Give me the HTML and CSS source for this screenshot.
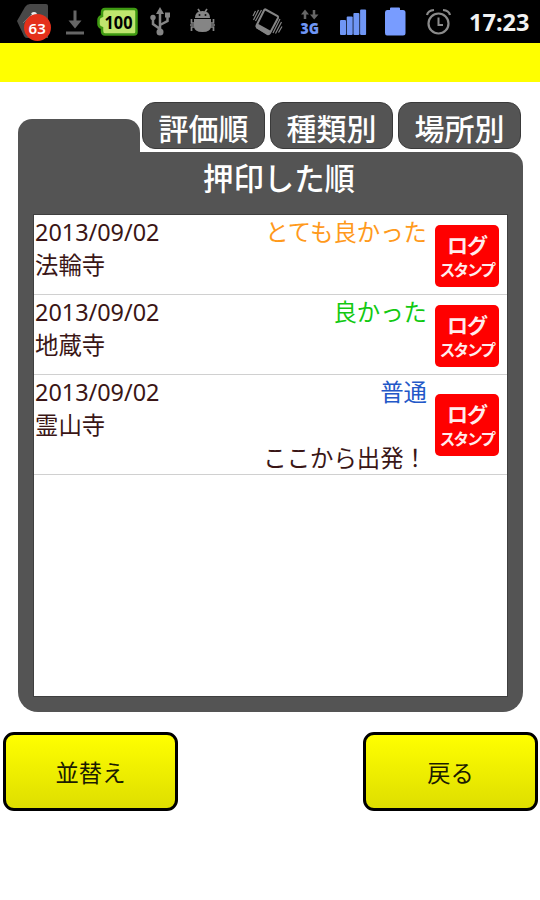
FILE: index.html
```html
<!DOCTYPE html>
<html lang="ja">
<head>
  <meta charset="UTF-8" />
  <meta name="viewport" content="width=device-width, initial-scale=1.0" />
  <title>ログスタンプ</title>
  <link rel="stylesheet" href="styles.css">
</head>
<body>
  <header class="status-bar">
    <svg width="44" height="43" viewBox="12 0 44 43">
      <path d="M17 21 L25 7 Q27 4 30 4 H46 Q48 4 48 6 V38 H27 Q25 38 24 36Z" fill="#484848" />
      <circle cx="34" cy="15" r="3" fill="#eee" />
      <path d="M23 23 L32 14" stroke="#777" stroke-width="1" />
      <circle cx="37.500" cy="27.500" r="13.500" fill="#e4301b" />
      <text x="37.200" y="33.500" class="badge-text">63</text>
    </svg>
    <svg width="36" height="43" viewBox="56 0 36 43">
      <path d="M75 10.500 V23 M66 33 H84" stroke="#666" stroke-width="3" />
      <path d="M68.500 20.500 H81.500 L75 28.500Z" fill="#666" />
    </svg>
    <svg width="52" height="43" viewBox="92 0 52 43">
      <path d="M105 9 H134 Q136.500 9 136.500 11.500 V32 Q136.500 34.500 134 34.500 H105 Q102 34.500 102 31 V28 Q98.500 27 98.500 24 V20 Q98.500 17 102 16 V12.500 Q102 9 105 9Z" fill="#bfe66e" stroke="#3f9a12" stroke-width="2.500" />
      <text x="104.500" y="28.500" class="charge-text" textLength="28" lengthAdjust="spacingAndGlyphs">100</text>
    </svg>
    <svg width="34" height="43" viewBox="144 0 34 43">
      <g fill="none" stroke="#858585" stroke-width="2.500">
        <path d="M160 32 V11 M160 29 L153 24 V18 M160 25 L167.500 21 V16" />
      </g>
      <g fill="#858585">
        <path d="M156 14 L160 7 L164 14Z" />
        <circle cx="160" cy="32" r="3.500" />
        <circle cx="153" cy="17.500" r="2.700" />
        <path d="M165 12.500 H170 V17.500 H165Z" />
      </g>
    </svg>
    <svg width="50" height="43" viewBox="178 0 50 43">
      <path d="M195 18 Q195 11 202.500 11 Q210 11 210 18Z M194 19 H211 V26 Q211 32 202.500 32 Q194 32 194 26Z" fill="#858585" />
      <g fill="none" stroke="#858585" stroke-width="1.700">
        <path d="M198 9 L200 12 M207 9 L205 12" />
        <path d="M195 23 H191.500 V19 M194 25 H190 M195 27 H191.500 V31 M210 23 H213.500 V19 M211 25 H215 M210 27 H213.500 V31" />
      </g>
      <circle cx="199.500" cy="15" r="1" fill="#111" />
      <circle cx="205.500" cy="15" r="1" fill="#111" />
    </svg>
    <svg class="push-right" width="40" height="43" viewBox="248 0 40 43">
      <path d="M265.500 9.500 L277.500 16 Q278.500 17 278 18 L270 33 Q269 34.500 267.500 34 L257 27.500 Q256 26.500 256.500 25.500 L264 10.500 Q264.500 9 265.500 9.500Z" fill="none" stroke="#858585" stroke-width="2" />
      <path d="M257.500 23.500 L271 31 L268 35 L256 28Z" fill="#858585" />
      <path d="M261.500 10 L255.500 21 M258.500 10 L253.500 20 M255.500 11 L253 16 M280 19 L273 33 M281.500 22 L275.500 33.500 M282 26.500 L278.500 32.500" stroke="#858585" stroke-width="1.200" />
    </svg>
    <svg width="42" height="43" viewBox="288 0 42 43">
      <path d="M305 19 V12 M314 10 V17" stroke="#666" stroke-width="2.500" />
      <path d="M301 14.500 L305 9.500 L309 14.500Z M310 14.500 H318.500 L314.200 19.500Z" fill="#666" />
      <text x="300.500" y="34" class="network-text" textLength="18.500" lengthAdjust="spacingAndGlyphs">3G</text>
    </svg>
    <svg width="44" height="43" viewBox="330 0 44 43">
      <g fill="#6f96f5">
        <rect x="340" y="20" width="6" height="15" rx="1" />
        <rect x="346.700" y="16.500" width="6" height="18.500" rx="1" />
        <rect x="353.400" y="13" width="6" height="22" rx="1" />
        <rect x="360.100" y="9.500" width="6" height="25.500" rx="1" />
      </g>
    </svg>
    <svg width="42" height="43" viewBox="374 0 42 43">
      <path d="M387 10 H390 V8.500 Q390 7.500 391 7.500 H399 Q400 7.500 400 8.500 V10 H403 Q405.500 10 405.500 12.500 V33 Q405.500 35.500 403 35.500 H387 Q385 35.500 385 33 V12.500 Q385 10 387 10Z" fill="#789cff" />
    </svg>
    <svg width="44" height="43" viewBox="416 0 44 43">
      <g fill="none" stroke="#8b8b8b">
        <circle cx="438.500" cy="23.500" r="10" stroke-width="2.200" />
        <path d="M438.500 17.500 V25 H443" stroke-width="2" />
        <path d="M427 15 Q428 10.500 434 10 M450 15 Q449 10.500 443 10" stroke-width="2.200" />
      </g>
    </svg>
    <span class="clock">17:23</span>
  </header>
  <div class="title-bar"></div>

  <main class="folder">
    <nav class="tabs">
      <div class="tab active"></div>
      <div class="tab">評価順</div>
      <div class="tab">種類別</div>
      <div class="tab">場所別</div>
    </nav>
    <section class="panel">
      <h1 class="panel-title">押印した順</h1>
      <div class="list">
        <div class="row">
          <div class="info">
            <div class="line"><span>2013/09/02</span><span class="great">とても良かった</span></div>
            <div>法輪寺</div>
          </div>
          <div class="stamp"><span class="stamp-top">ログ</span><span class="stamp-bottom">スタンプ</span></div>
        </div>
        <div class="row">
          <div class="info">
            <div class="line"><span>2013/09/02</span><span class="good">良かった</span></div>
            <div>地蔵寺</div>
          </div>
          <div class="stamp"><span class="stamp-top">ログ</span><span class="stamp-bottom">スタンプ</span></div>
        </div>
        <div class="row tall">
          <div class="info">
            <div class="line"><span>2013/09/02</span><span class="normal">普通</span></div>
            <div>霊山寺</div>
            <div class="comment">ここから出発！</div>
          </div>
          <div class="stamp"><span class="stamp-top">ログ</span><span class="stamp-bottom">スタンプ</span></div>
        </div>
      </div>
    </section>
  </main>

  <footer class="buttons">
    <button class="btn">並替え</button>
    <button class="btn">戻る</button>
  </footer>
</body>
</html>
```
FILE: styles.css
```css
* {
  box-sizing: border-box;
}
body {
  margin: 0;
  height: 900px;
  overflow: hidden;
  background: #fff;
  color: #3a1616;
  font-family: 'Noto Sans', 'Noto Sans CJK JP', sans-serif;
}
.status-bar {
  display: flex;
  align-items: center;
  height: 43px;
  padding-left: 12px;
  background: #000;
}
.status-bar svg {
  flex: none;
}
.push-right {
  margin-left: 20px;
}
.clock {
  padding-left: 9px;
  color: #f2f2f2;
  font-size: 23.500px;
  font-weight: bold;
  line-height: 44px;
}
.badge-text {
  fill: #fff;
  font-size: 15px;
  font-weight: 600;
  text-anchor: middle;
}
.charge-text {
  fill: #000;
  font-size: 18.500px;
  font-weight: bold;
}
.network-text {
  fill: #6f96f5;
  font-size: 16px;
  font-weight: 900;
}
.title-bar {
  height: 39px;
  background: #ff0;
}
.folder {
  width: 505px;
  margin: 20px 0 0 18px;
}
.tabs {
  display: flex;
  align-items: flex-start;
  gap: 5px;
  height: 50px;
}
.tab {
  width: 123px;
  height: 47px;
  border: 1px solid #3a3a3a;
  border-radius: 13px;
  background: #545454;
  color: #fff;
  font-size: 30px;
  font-weight: 500;
  line-height: 51px;
  text-align: center;
}
.tab.active {
  align-self: flex-end;
  width: 122px;
  height: 33px;
  margin-right: -3px;
  border: none;
  border-radius: 14px 14px 0 0;
}
.panel {
  height: 560px;
  padding: 0 16px;
  border-radius: 0 14px 20px 20px;
  background: #545454;
}
.panel-title {
  height: 63px;
  margin: 0;
  padding-left: 17px;
  color: #fff;
  font-size: 30.400px;
  font-weight: 500;
  line-height: 53px;
  text-align: center;
}
.list {
  height: 481px;
  background: #fff;
  outline: 1px solid #3f3f3f;
}
.row {
  display: flex;
  align-items: center;
  height: 80px;
  padding: 3px 8px 0 0;
  border-bottom: 1.500px solid #d0d0d0;
}
.row.tall {
  height: 100px;
  padding-top: 1px;
}
.info {
  flex: 1;
  align-self: flex-start;
  margin-top: -2px;
  padding: 0 8px 0 1px;
  font-size: 23.400px;
  line-height: 33px;
}
.tall .info {
  margin-top: 0;
}
.line {
  display: flex;
  justify-content: space-between;
}
.great {
  color: #ff9a1c;
}
.good {
  color: #12c912;
}
.normal {
  color: #2358c8;
}
.comment {
  text-align: right;
}
.stamp {
  display: flex;
  flex-direction: column;
  align-items: center;
  width: 64px;
  height: 62px;
  padding-top: 7px;
  border-radius: 5px;
  background: #f00;
  color: #ffecec;
  font-weight: bold;
  white-space: nowrap;
}
.stamp-top {
  font-size: 21px;
  line-height: 27px;
  letter-spacing: -1px;
}
.stamp-bottom {
  font-size: 15.500px;
  line-height: 22px;
  letter-spacing: -1.800px;
}
.buttons {
  display: flex;
  justify-content: space-between;
  margin-top: 20px;
  padding: 0 2px 0 3px;
}
.btn {
  width: 175px;
  height: 79px;
  padding: 0;
  border: 3px solid #000;
  border-radius: 11px;
  background: linear-gradient(#ff0, #dede00);
  color: #1c1c00;
  font-family: inherit;
  font-size: 23.300px;
}
```
